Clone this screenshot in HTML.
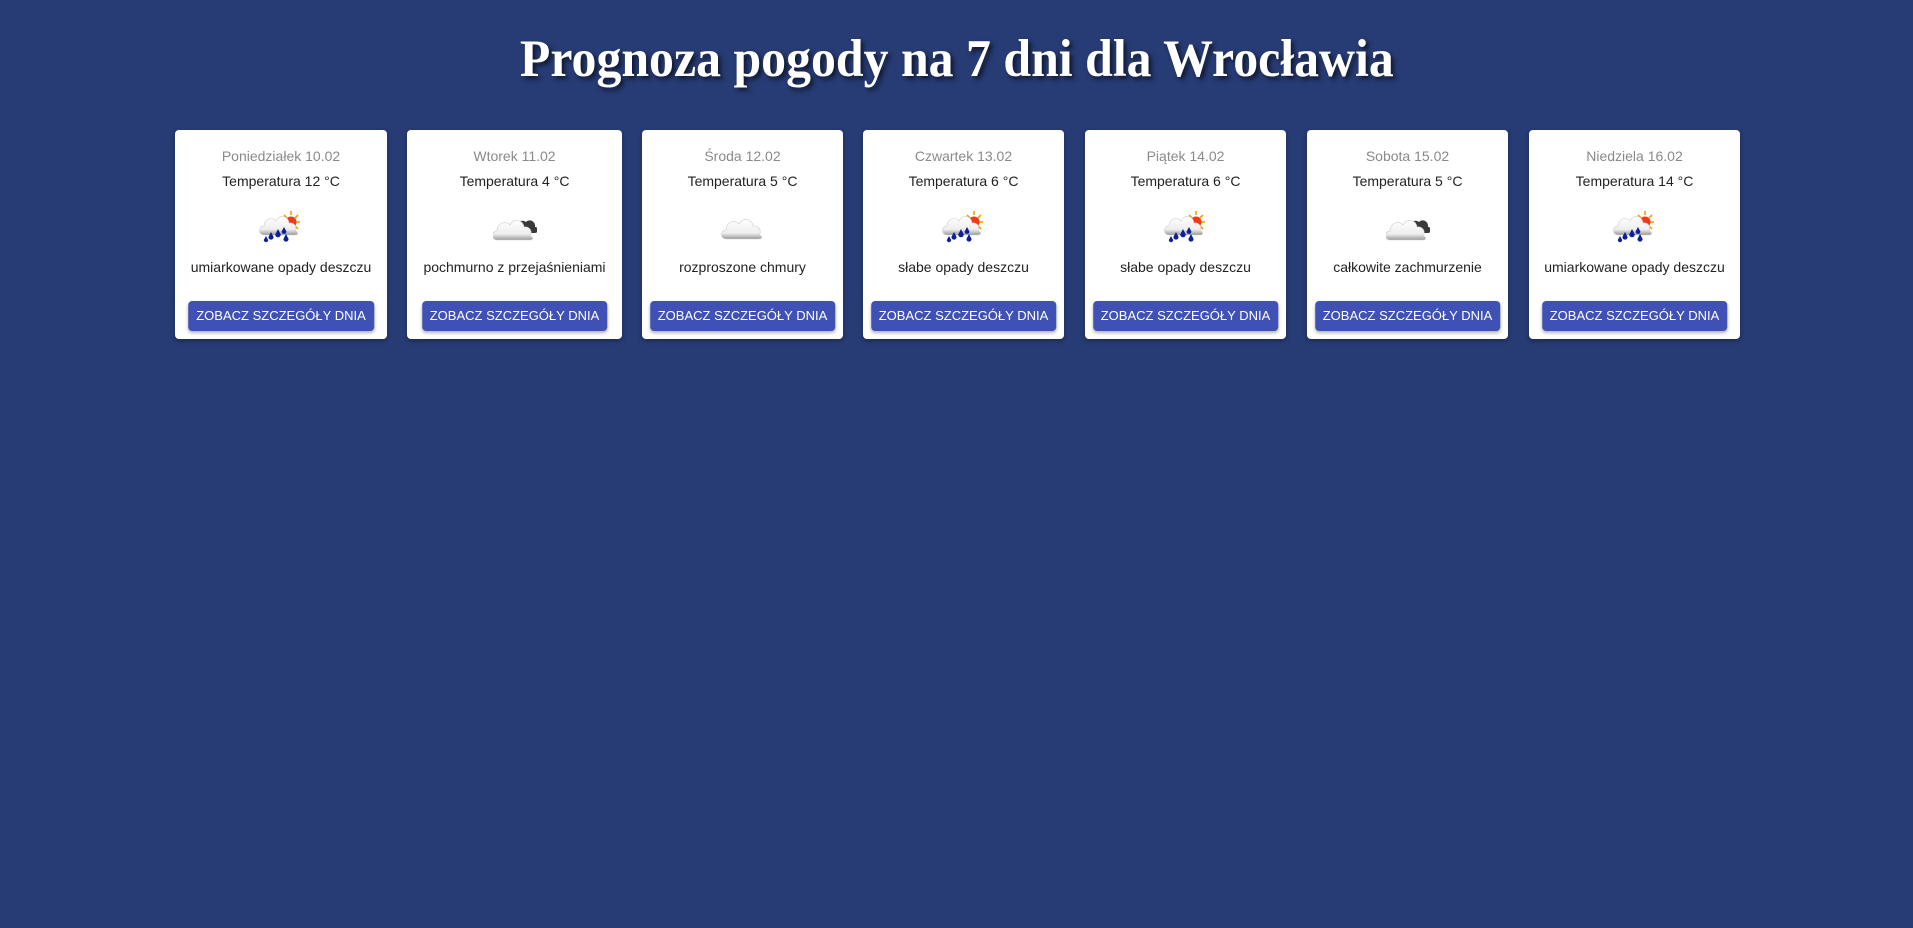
<!DOCTYPE html>
<html><head><meta charset="utf-8"><style>
html,body{margin:0;padding:0;}
body{width:1913px;height:928px;background:#273b74;position:relative;overflow:hidden;font-family:"Liberation Sans",Arial,sans-serif;}
h1{position:absolute;left:0;right:0;top:29px;margin:0;text-align:center;font-family:"Liberation Serif",serif;font-weight:bold;font-size:53px;color:#fff;text-shadow:3px 3px 5px rgba(0,0,0,.6);}
h1 span{display:inline-block;transform:scaleX(0.94);transform-origin:center;}
.card{position:absolute;top:130px;height:209px;background:#fff;border-radius:4px;box-shadow:0 2px 4px rgba(0,0,0,.3);text-align:center;}
.d{position:absolute;left:0;right:0;top:17px;font-size:14px;color:#8a8a8a;line-height:18px;}
.t{position:absolute;left:0;right:0;top:42px;font-size:14px;color:#222;line-height:18px;}
.i{position:absolute;left:50%;top:81px;margin-left:-22px;width:44px;height:32px;}
.s{position:absolute;left:0;right:0;top:128px;font-size:14px;color:#222;line-height:18px;white-space:nowrap;}
.b{position:absolute;left:50%;transform:translateX(-50%);top:171px;height:30px;line-height:30px;padding:0 8px;background:#3f51b5;color:#fff;font-size:13px;border-radius:4px;box-shadow:0 2px 3px rgba(0,0,0,.3);white-space:nowrap;}
</style></head><body>
<svg width="0" height="0" style="position:absolute">
<defs>
<linearGradient id="cg" x1="0" y1="0" x2="0" y2="1"><stop offset="0" stop-color="#fff"/><stop offset=".7" stop-color="#eee"/><stop offset="1" stop-color="#999"/></linearGradient>
<symbol id="cloud" viewBox="0 0 44 32"><path d="M5 28 C-1 28 -1 19 5 19 C5 11 14 8 18 13 C21 6 31 7 32 15 C38 14 41 20 38 24 C42 25 41 28 38 28 Z" fill="url(#cg)" stroke="#ccc" stroke-width=".6"/></symbol>
<symbol id="dark" viewBox="0 0 44 32"><path d="M23 21 C20 13 28 7 33 11 C37 7 43 11 42 16 C46 16 46 22 42 22 L26 22 Z" fill="#3a3a3a"/><path d="M4 29 C-2 29 -2 20 4 20 C4 12 13 9 17 14 C20 7 30 8 31 16 C37 15 40 21 37 25 C41 26 40 29 37 29 Z" fill="url(#cg)" stroke="#ccc" stroke-width=".6"/></symbol>
<symbol id="rain" viewBox="0 0 44 32"><g stroke="#f5a000" stroke-width="1.6"><line x1="32" y1="0" x2="32" y2="4"/><line x1="32" y1="18" x2="32" y2="22"/><line x1="23" y1="11" x2="27" y2="11"/><line x1="37" y1="11" x2="41" y2="11"/><line x1="25" y1="4" x2="28" y2="7"/><line x1="36" y1="15" x2="39" y2="18"/><line x1="39" y1="4" x2="36" y2="7"/></g><circle cx="32" cy="11" r="5.5" fill="#f23a1a"/><path d="M5 24 C-1 24 -1 15 5 15 C5 8 13 5 17 10 C20 3 29 4 30 12 C36 11 38 17 36 20 C40 21 39 24 36 24 Z" fill="url(#cg)" stroke="#ccc" stroke-width=".6"/><g fill="#0d1f9a"><path d="M12 21 l-2.6 5 a2.6 2.6 0 0 0 5.2 0z"/><path d="M19 18 l-2.8 5.5 a2.8 2.8 0 0 0 5.6 0z"/><path d="M25 16 l-2.4 4.5 a2.4 2.4 0 0 0 4.8 0z"/><path d="M27 23 l-2.6 5 a2.6 2.6 0 0 0 5.2 0z"/><path d="M7 25 l-2.2 4 a2.2 2.2 0 0 0 4.4 0z"/></g></symbol>
</defs></svg>
<h1><span>Prognoza pogody na 7 dni dla Wrocławia</span></h1>

<div class="card" style="left:175px;width:212px"><div class="d">Poniedziałek 10.02</div><div class="t">Temperatura 12 °C</div><svg class="i"><use href="#rain"/></svg><div class="s">umiarkowane opady deszczu</div><div class="b">ZOBACZ SZCZEGÓŁY DNIA</div></div>
<div class="card" style="left:407px;width:215px"><div class="d">Wtorek 11.02</div><div class="t">Temperatura 4 °C</div><svg class="i"><use href="#dark"/></svg><div class="s">pochmurno z przejaśnieniami</div><div class="b">ZOBACZ SZCZEGÓŁY DNIA</div></div>
<div class="card" style="left:642px;width:201px"><div class="d">Środa 12.02</div><div class="t">Temperatura 5 °C</div><svg class="i"><use href="#cloud"/></svg><div class="s">rozproszone chmury</div><div class="b">ZOBACZ SZCZEGÓŁY DNIA</div></div>
<div class="card" style="left:863px;width:201px"><div class="d">Czwartek 13.02</div><div class="t">Temperatura 6 °C</div><svg class="i"><use href="#rain"/></svg><div class="s">słabe opady deszczu</div><div class="b">ZOBACZ SZCZEGÓŁY DNIA</div></div>
<div class="card" style="left:1085px;width:201px"><div class="d">Piątek 14.02</div><div class="t">Temperatura 6 °C</div><svg class="i"><use href="#rain"/></svg><div class="s">słabe opady deszczu</div><div class="b">ZOBACZ SZCZEGÓŁY DNIA</div></div>
<div class="card" style="left:1307px;width:201px"><div class="d">Sobota 15.02</div><div class="t">Temperatura 5 °C</div><svg class="i"><use href="#dark"/></svg><div class="s">całkowite zachmurzenie</div><div class="b">ZOBACZ SZCZEGÓŁY DNIA</div></div>
<div class="card" style="left:1529px;width:211px"><div class="d">Niedziela 16.02</div><div class="t">Temperatura 14 °C</div><svg class="i"><use href="#rain"/></svg><div class="s">umiarkowane opady deszczu</div><div class="b">ZOBACZ SZCZEGÓŁY DNIA</div></div>
</body></html>
